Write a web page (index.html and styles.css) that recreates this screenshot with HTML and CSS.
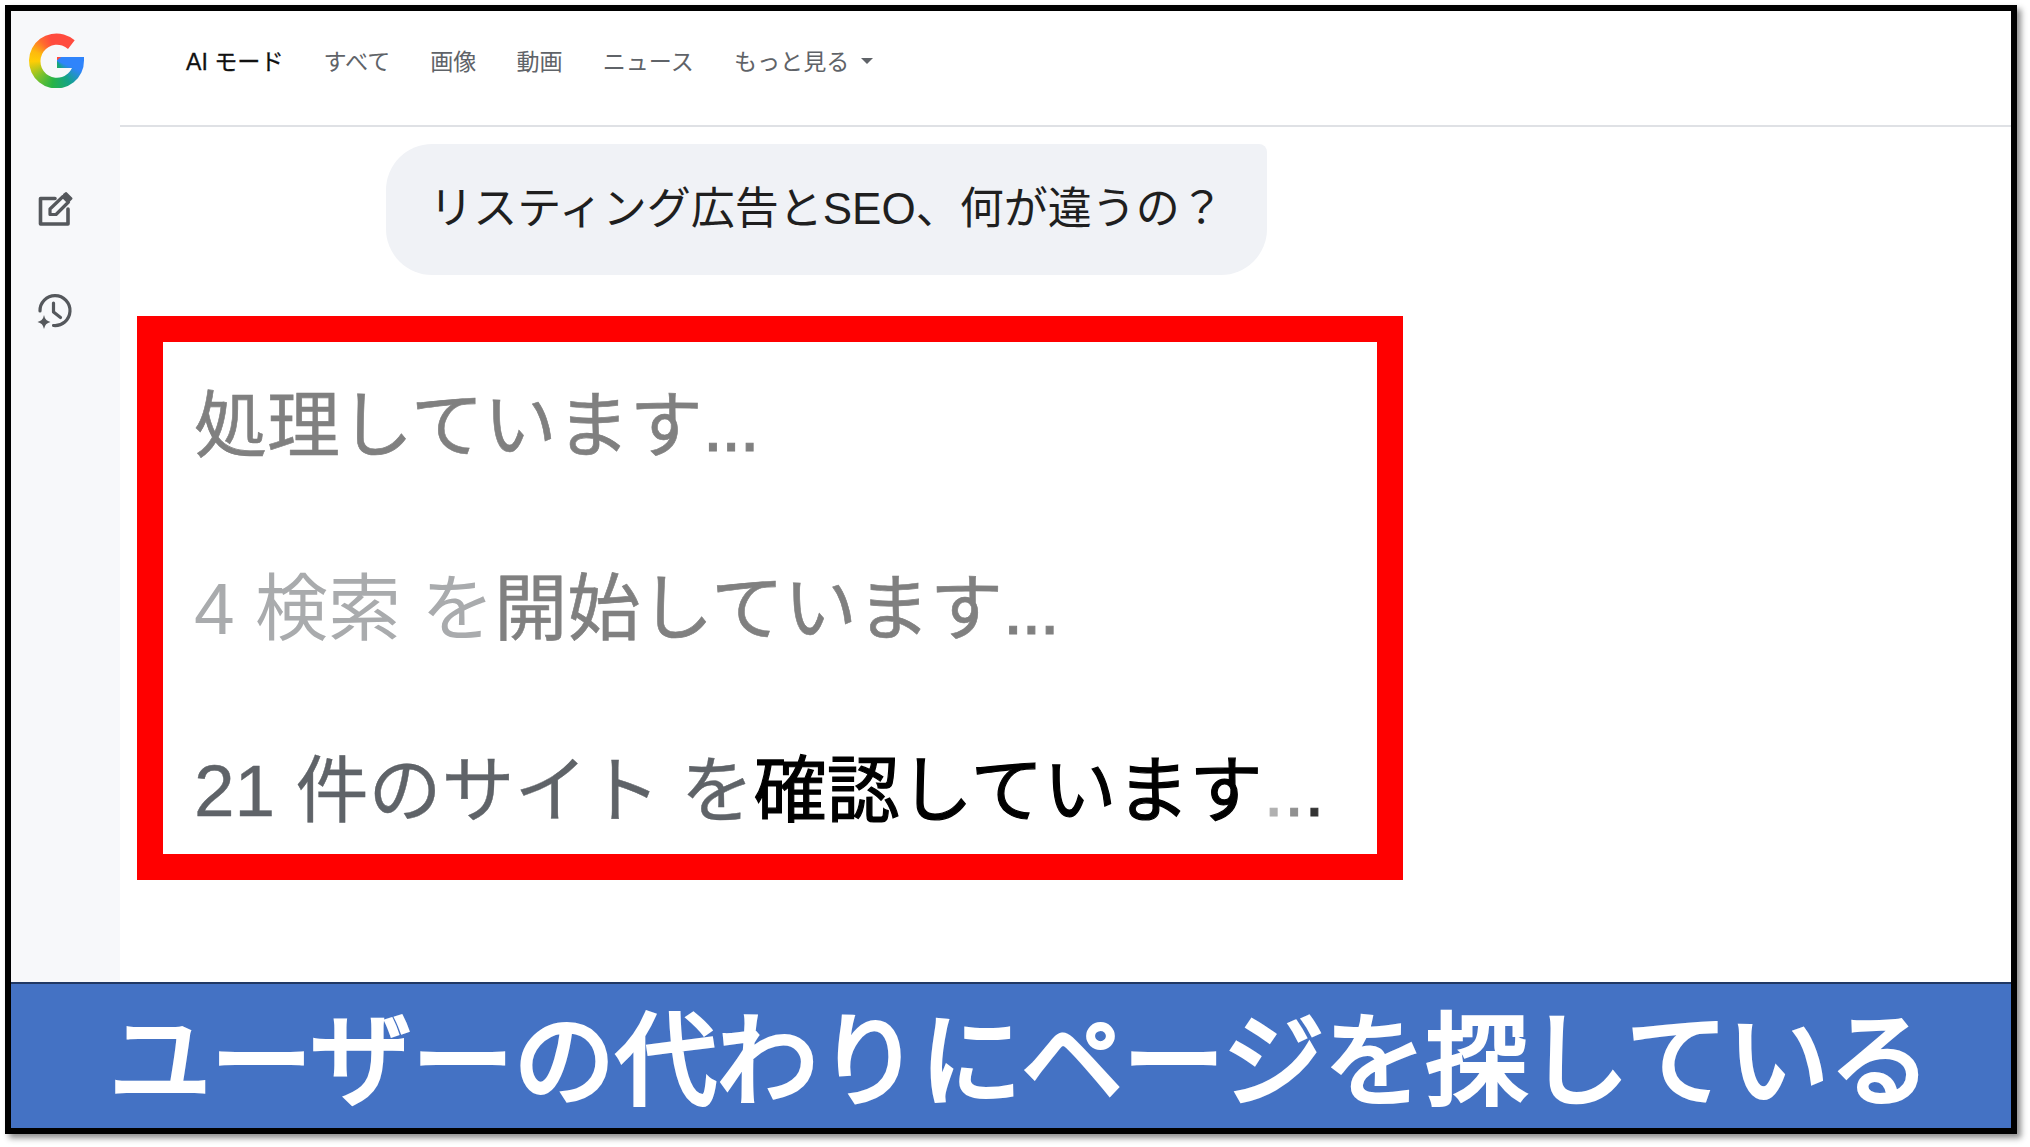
FILE: index.html
```html
<!DOCTYPE html>
<html lang="ja">
<head>
    <meta charset="UTF-8">
    <meta name="viewport" content="width=device-width, initial-scale=1.0">
    <title>AI モード</title>
    <link rel="stylesheet" href="styles.css">
</head>
<body>
    <div class="frame">
        <div class="page">
            <aside class="sidebar">
                <div class="g-logo"></div>
                <svg class="side-icon edit-icon" viewBox="0 0 34 34" fill="none" stroke="#55585c" stroke-width="3.6" stroke-linejoin="round" stroke-linecap="round">
                    <path d="M16 6.500H1.500V32H29V17"/>
                    <path d="M11 22.500v-5.500L24 4.500l5.500 5.500-12.500 12.500z" stroke-width="3.2"/>
                    <path d="M25 2.500l2-1.500 5.500 5.500-2 2z" fill="#55585c" stroke-width="2"/>
                </svg>
                <svg class="side-icon history-icon" viewBox="0 0 34 34" fill="none" stroke="#55585c" stroke-width="3.2" stroke-linecap="round" stroke-linejoin="round">
                    <path d="M2 17A15 15 0 1 1 15.500 31.500"/>
                    <path d="M15.500 9v9l7 5.500"/>
                    <path d="M6 21Q7 26.800 12.500 28 7 29.200 6 35 5 29.200-.5 28 5 26.800 6 21z" fill="#55585c" stroke="none"/>
                </svg>
            </aside>
            <main class="main">
                <nav class="nav">
                    <span class="nav-item active">AI モード</span>
                    <span class="nav-item">すべて</span>
                    <span class="nav-item">画像</span>
                    <span class="nav-item">動画</span>
                    <span class="nav-item">ニュース</span>
                    <span class="nav-item more">もっと見る<i class="caret"></i></span>
                </nav>
                <div class="bubble">リスティング広告とSEO、何が違うの？</div>
                <section class="highlight">
                    <p class="step"><span class="mid">処理しています<span class="dots">...</span></span></p>
                    <p class="step"><span class="light">4 検索 を</span><span class="mid">開始しています<span class="dots">...</span></span></p>
                    <p class="step"><span class="dark">21 件のサイト を</span><span class="strong">確認しています</span><span class="dots last"><span class="dot-a">.</span><span class="dot-b">.</span><span class="dot-c">.</span></span></p>
                </section>
            </main>
        </div>
        <div class="banner">ユーザーの代わりにページを探している</div>
    </div>
</body>
</html>
```

FILE: styles.css
```css
* {
    box-sizing: border-box;
}
body {
    margin: 0;
    padding: 5px;
    height: 1147px;
    overflow: hidden;
    background-color: white;
    font-family: "Liberation Sans", "Noto Sans CJK JP", sans-serif;
}
.frame {
    width: 2012px;
    height: 1129px;
    border: 6px solid black;
    box-shadow: 4px 4px 6px rgba(0, 0, 0, 0.45);
    display: flex;
    flex-direction: column;
}
.page {
    flex: 1;
    display: flex;
    min-height: 0;
}
.sidebar {
    width: 109px;
    background-color: #f7f8fa;
    display: flex;
    flex-direction: column;
    padding: 22px 0 0 18px;
}
.g-logo {
    width: 55px;
    height: 55px;
    background: conic-gradient(#ff4b3e 0deg, #ff4b3e 48deg, #2f84fb 58deg, #2f84fb 112deg, #13a387 150deg, #28b446 190deg, #7fc22c 228deg, #ffcd05 268deg, #fdb90e 292deg, #ff6b2f 322deg, #ff4b3e 345deg);
    clip-path: path("M45.7 7.300A27.500 27.500 0 1 0 55 27.500V24H28V35H43A16.500 16.500 0 1 1 39 16Z");
}
.side-icon {
    display: block;
    width: 34px;
    height: 34px;
    overflow: visible;
}
.edit-icon {
    margin: 104px 0 0 10px;
}
.history-icon {
    margin: 68px 0 0 9px;
}
.main {
    flex: 1;
    min-width: 0;
}
.nav {
    height: 116px;
    border-bottom: 2px solid #dfe1e5;
    display: flex;
    align-items: center;
    gap: 40px;
    padding: 0 0 17px 66px;
    font-size: 23.100px;
    color: #5f6368;
}
.nav-item.active {
    color: #111;
    -webkit-text-stroke: 0.3px #111;
}
.more {
    display: flex;
    align-items: center;
}
.caret {
    margin: 3px 0 0 12px;
    border-top: 6px solid #5f6368;
    border-left: 6px solid transparent;
    border-right: 6px solid transparent;
}
.bubble {
    width: 881px;
    height: 131px;
    margin: 17px 0 0 266px;
    padding-bottom: 10px;
    background-color: #f0f2f6;
    border-radius: 46px 8px 46px 46px;
    display: flex;
    align-items: center;
    justify-content: center;
    font-size: 44px;
    color: #1f1f1f;
}
.highlight {
    width: 1266px;
    height: 564px;
    margin: 41px 0 0 17px;
    border: 26px solid #ff0000;
    display: flex;
    flex-direction: column;
    justify-content: space-between;
    padding: 34px 0 13px 31px;
}
.step {
    margin: 0;
    font-size: 73px;
    line-height: 100px;
    white-space: nowrap;
}
.light {
    color: #a9abad;
}
.mid {
    color: #808080;
    -webkit-text-stroke: 0.6px #808080;
}
.dark {
    color: #5f6368;
    -webkit-text-stroke: 0.4px #5f6368;
}
.strong {
    color: black;
    -webkit-text-stroke: 1.2px black;
}
.dots {
    letter-spacing: -2px;
    -webkit-text-stroke: 1px;
}
.dots.last {
    letter-spacing: 0;
    margin-left: 1px;
}
.dot-a {
    color: #b0b0b0;
}
.dot-b {
    color: #909090;
}
.dot-c {
    color: #333;
}
.banner {
    height: 146px;
    background-color: #4472c4;
    border-top: 2px solid #203864;
    display: flex;
    align-items: center;
    justify-content: center;
    padding: 0 0 8px 18px;
    color: white;
    font-size: 101.600px;
    font-weight: 400;
    -webkit-text-stroke: 4px white;
    font-family: "Noto Sans CJK JP", sans-serif;
    white-space: nowrap;
}
```
